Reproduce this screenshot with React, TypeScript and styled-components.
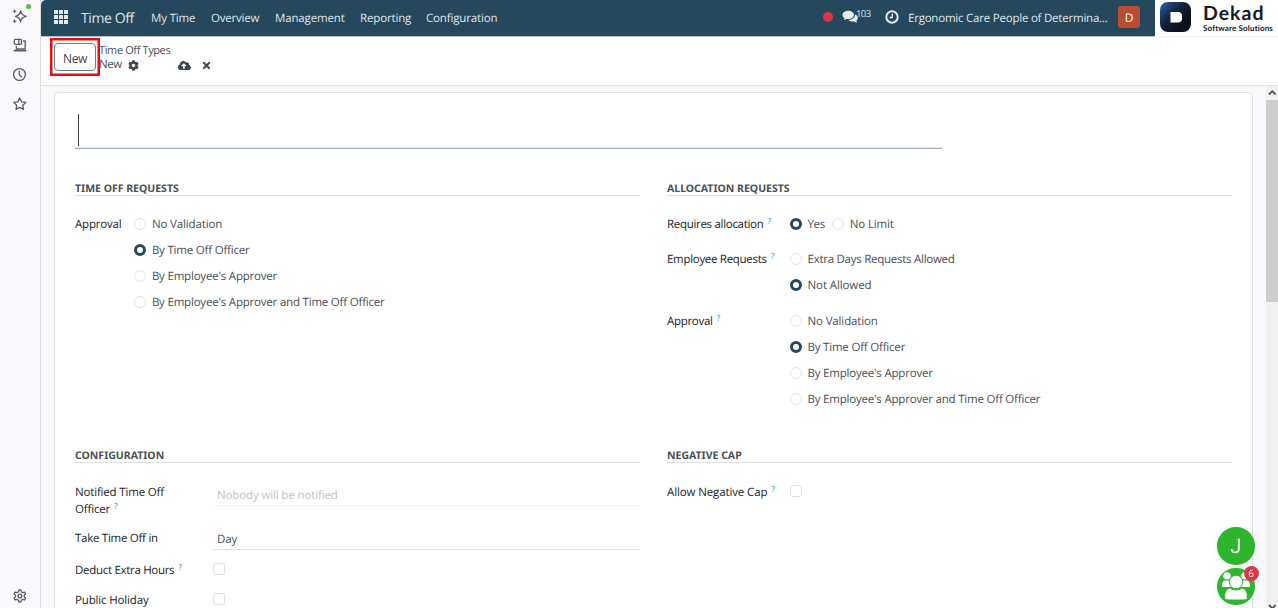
import React from 'react';
import styled, { createGlobalStyle, css } from 'styled-components';
import { FaCog, FaCloudUploadAlt, FaTimes } from 'react-icons/fa';

const GlobalStyle = createGlobalStyle`
  * { box-sizing: border-box; }
  body {
    margin: 0;
    overflow: hidden;
    font-family: "Open Sans", "Noto Sans", sans-serif;
    font-size: 11.5px;
    letter-spacing: -0.2px;
    color: #495057;
    text-rendering: geometricPrecision;
  }
`;

const Page = styled.div`
  display: grid;
  grid-template-columns: 41px 1fr;
  height: 608px;
  background: #f9f9fb;
`;

const SideBar = styled.aside`
  display: flex;
  flex-direction: column;
  align-items: center;
  gap: 13.3px;
  padding: 8px 1px 4px 0;
  border-right: 1px solid #dcdde1;
  color: #5b5b66;
  svg { display: block; }
`;

const SideIcon = styled.div<{ $bottom?: boolean }>`
  position: relative;
  width: 16px;
  height: 16px;
  margin-top: ${p => (p.$bottom ? 'auto' : '0')};
`;

const StatusDot = styled.i`
  position: absolute;
  top: -4px;
  left: 14px;
  width: 5px;
  height: 5px;
  border-radius: 50%;
  background: #4fbf40;
`;

const Main = styled.div`
  display: grid;
  grid-template-rows: 36px 50px 522px;
  min-width: 0;
  overflow: hidden;
  border-top-left-radius: 5px;
`;

const NavBar = styled.header`
  display: flex;
  background: #26485c;
  box-shadow: 0 1px 0 #b7c5cd;
  color: #dfe5e9;
  z-index: 1;
`;

const NavLeft = styled.nav`
  display: flex;
  align-items: center;
  padding-left: 13px;
  height: 36px;
`;

const AppsGrid = styled.div`
  display: grid;
  grid-template-columns: repeat(3, 4px);
  grid-auto-rows: 4px;
  gap: 1px;
  margin-right: 13px;
  margin-top: -3px;
  i { background: #e4e9ec; border-radius: 0.5px; }
`;

const AppName = styled.span`
  width: 70px;
  font-size: 14px;
  letter-spacing: -0.4px;
`;

const NavItem = styled.span<{ $w: number; $ls?: number }>`
  width: ${p => p.$w}px;
  white-space: nowrap;
  letter-spacing: ${p => p.$ls ?? -0.15}px;
`;

const NavRight = styled.div`
  display: flex;
  align-items: center;
  height: 34px;
  margin-left: auto;
`;

const RecordDot = styled.i`
  width: 10px;
  height: 10px;
  margin-right: 9px;
  border-radius: 50%;
  background: #dc3545;
`;

const Count = styled.span`
  width: 29px;
  margin: -8px 0 0 -2px;
  font-size: 9.5px;
  letter-spacing: -0.6px;
`;

const Company = styled.span`
  width: 210px;
  margin: 2px 0 0 9px;
  white-space: nowrap;
  letter-spacing: -0.22px;
`;

const Avatar = styled.div`
  display: flex;
  align-items: center;
  justify-content: center;
  width: 22px;
  height: 22px;
  margin-right: 15px;
  border-radius: 3px;
  background: #b84d31;
  color: #fff;
  font-size: 12px;
`;

const Brand = styled.div`
  display: flex;
  gap: 12px;
  width: 123px;
  height: 37px;
  padding: 2px 0 0 5px;
  background: #fff;
  border-bottom: 1px solid #f3f3f3;
  color: #17191c;
`;

const BrandMark = styled.svg`
  flex: none;
  display: block;
`;

const BrandName = styled.div`
  padding-top: 1px;
  font: 700 19.5px/22px Lato, sans-serif;
  letter-spacing: 1px;
`;

const BrandSub = styled.div`
  margin-top: -1px;
  font: 700 8px/9px Lato, sans-serif;
  letter-spacing: 0.15px;
  white-space: nowrap;
`;

const ControlBar = styled.div`
  display: flex;
  padding: 2px 0 0 9px;
  background: #fff;
  border-bottom: 1px solid #dee2e6;
`;

const Highlight = styled.div`
  width: 50px;
  height: 38px;
  padding: 3px 1px;
  border: 2px solid #e30f12;
  box-shadow: inset 0 0 0 0.5px #e30f12;
`;

const NewButton = styled.button`
  display: block;
  width: 42px;
  height: 28px;
  margin-left: 1px;
  padding: 2px 0 0;
  border: 1px solid #6a7f8c;
  border-radius: 4px;
  background: #fff;
  color: #3f474e;
  font: inherit;
  font-size: 12px;
  letter-spacing: -0.3px;
`;

const Crumbs = styled.div`
  margin-left: -1px;
  padding-top: 6px;
  line-height: 14px;
  font-size: 11px;
  letter-spacing: -0.38px;
  color: #495057;
`;

const CrumbRow = styled.div`
  display: flex;
  align-items: center;
  font-size: 11.5px;
  svg { display: block; color: #3f474e; }
  svg:nth-of-type(1) { margin-left: 6px; }
  svg:nth-of-type(2) { margin-left: 39px; }
  svg:nth-of-type(3) { margin-left: 10px; }
`;

const Scroller = styled.div`
  display: grid;
  grid-template-columns: 1fr 12px;
  grid-template-rows: 522px;
  overflow: hidden;
  background: #f8f9fa;
`;

const Sheet = styled.main`
  width: 1199px;
  height: 530px;
  margin: 6px 0 0 13px;
  padding: 17px 19px 0 20px;
  border: 1px solid #dee2e6;
  border-radius: 4px;
  background: #fff;
`;

const TitleField = styled.div`
  width: 867px;
  height: 39px;
  padding: 4px 3px 0;
  border-bottom: 1px solid #9fb0bb;
  box-shadow: inset 0 -1px 0 #e2e6e9;
`;

const Caret = styled.div`
  width: 1px;
  height: 32px;
  background: #3a4046;
`;

const Columns = styled.div`
  display: grid;
  grid-template-columns: 565px 565px;
  column-gap: 27px;
  margin-top: 32px;
`;

const Section = styled.section<{ $h?: number }>`
  height: ${p => p.$h ?? 160}px;
`;

const Heading = styled.h2`
  height: 15px;
  margin: 0 0 20px;
  border-bottom: 1px solid #dee2e6;
  font: 700 10.5px/16px "Noto Sans", sans-serif;
  letter-spacing: 0;
  color: #495057;
`;

const Field = styled.div<{ $label: number; $gap?: number; $top?: number }>`
  display: grid;
  grid-template-columns: ${p => p.$label}px 1fr;
  margin-bottom: ${p => p.$gap ?? 0}px;
  padding-top: ${p => p.$top ?? 0}px;
`;

const Label = styled.label<{ $ls?: number; $top?: number }>`
  padding-top: ${p => p.$top ?? 0}px;
  line-height: 17px;
  color: #212529;
  white-space: nowrap;
  letter-spacing: ${p => p.$ls ?? -0.3}px;
`;

const Help = styled.sup`
  margin-left: 4px;
  font-size: 8.5px;
  line-height: 0;
  vertical-align: 4px;
  color: #17a2b8;
`;

const Options = styled.div<{ $row?: boolean }>`
  display: flex;
  flex-direction: ${p => (p.$row ? 'row' : 'column')};
  gap: ${p => (p.$row ? '7.5px' : '9px')};
`;

const Option = styled.div<{ $ls?: number }>`
  display: flex;
  align-items: center;
  gap: 5.5px;
  height: 17px;
  white-space: nowrap;
  letter-spacing: ${p => p.$ls ?? -0.2}px;
`;

const Radio = styled.i<{ $on?: boolean }>`
  flex: none;
  width: 12px;
  height: 12px;
  margin-top: -1px;
  border: 1px solid #e2e5e8;
  border-radius: 50%;
  ${p => p.$on && css`border: 3.5px solid #26485c;`}
`;

const CheckBox = styled.i`
  display: block;
  width: 12px;
  height: 12px;
  margin: 1px 0 0 0.4px;
  border: 1px solid #dfe2e6;
  border-radius: 3px;
`;

const TextInput = styled.div<{ $empty?: boolean }>`
  height: 22px;
  padding-left: 4px;
  line-height: ${p => (p.$empty ? 23 : 24)}px;
  letter-spacing: -0.13px;
  border-bottom: 1px solid ${p => (p.$empty ? '#f3f4f5' : '#e3e5e8')};
  color: ${p => (p.$empty ? '#c0c4c9' : '#495057')};
`;

const ScrollBar = styled.div`
  display: flex;
  flex-direction: column;
  align-items: center;
  background: #f1f1f1;
  svg { flex: none; display: block; }
`;

const Thumb = styled.div`
  width: 12px;
  height: 202px;
  margin-bottom: auto;
  background: #cdcdcd;
`;

const ChatDock = styled.div`
  position: fixed;
  left: 1217px;
  top: 527px;
  display: flex;
  flex-direction: column;
  gap: 3px;
`;

const Bubble = styled.div`
  position: relative;
  display: flex;
  align-items: center;
  justify-content: center;
  width: 37.5px;
  height: 37.5px;
  border-radius: 50%;
  background: #2eb52e;
  color: #fff;
  font: 400 20px Roboto, sans-serif;
  box-shadow: 0 1px 6px rgba(0, 0, 0, 0.08);
  svg { flex: none; }
`;

const Badge = styled.span`
  position: absolute;
  top: -2px;
  right: -4px;
  width: 15px;
  height: 15px;
  border-radius: 50%;
  background: #dc3545;
  font: 400 10px/15px "Open Sans", sans-serif;
  text-align: center;
`;

const ApprovalOptions = () => (
  <Options>
    <Option $ls={-0.14}><Radio />No Validation</Option>
    <Option><Radio $on />By Time Off Officer</Option>
    <Option $ls={-0.2}><Radio />By Employee's Approver</Option>
    <Option><Radio />By Employee's Approver and Time Off Officer</Option>
  </Options>
);

const line = { fill: 'none', stroke: 'currentColor', strokeWidth: 1.3, strokeLinejoin: 'round' as const, strokeLinecap: 'round' as const };

export default function App() {
  return (
    <Page>
      <GlobalStyle />
      <SideBar>
        <SideIcon>
          <svg width="16" height="16" viewBox="0 0 16 16" {...line}>
            <path d="M8.700 2.800Q9.200 7.300 14.200 8.300 9.200 9.300 8.700 13.800 7.800 9.300 3.400 8.300 7.800 7.300 8.700 2.800Z" />
            <path d="M2.600 1.900v2.600M1.300 3.200h2.600M2.600 11.900v2.600M1.300 13.200h2.600" strokeWidth="1.100" />
          </svg>
          <StatusDot />
        </SideIcon>
        <SideIcon>
          <svg width="16" height="16" viewBox="0 0 16 16" {...line}>
            <rect x="2.300" y="2.300" width="7.200" height="5" rx="1" />
            <path d="M6.800 2.500v4.600M11.500 4h1.700v7.500M4.300 9.500v2M4.300 12h9" />
            <path d="M2.500 13.600h11.200" strokeWidth="1.800" />
          </svg>
        </SideIcon>
        <SideIcon>
          <svg width="16" height="16" viewBox="0 0 16 16" {...line}>
            <circle cx="7.500" cy="7.500" r="5.900" />
            <path d="M7.300 4.100v3.600l2.200 2.200" />
          </svg>
        </SideIcon>
        <SideIcon>
          <svg width="16" height="16" viewBox="0 0 16 16" {...line}>
            <path d="M7.700 2l1.900 3.800 4.200.6-3 2.900.7 4.100-3.800-2-3.700 2 .7-4.100-3-2.900 4.200-.6z" />
          </svg>
        </SideIcon>
        <SideIcon $bottom>
          <svg width="16" height="16" viewBox="0 0 16 16" {...line}>
            <path d="M6.900 2h1.900l.5 1.900 1.400.8 1.900-.6 1 1.800-1.400 1.400v1.500l1.400 1.400-1 1.800-1.900-.6-1.400.8-.5 1.900H6.900l-.5-1.900L5 11.400l-1.900.6-1-1.800 1.400-1.400V7.300L2.100 5.900l1-1.800 1.900.6 1.400-.8z" />
            <circle cx="7.850" cy="8.050" r="1.900" />
          </svg>
        </SideIcon>
      </SideBar>

      <Main>
        <NavBar>
          <NavLeft>
            <AppsGrid>{Array.from({ length: 9 }, (_, i) => <i key={i} />)}</AppsGrid>
            <AppName>Time Off</AppName>
            <NavItem $w={60}>My Time</NavItem>
            <NavItem $w={64} $ls={-0.22}>Overview</NavItem>
            <NavItem $w={85}>Management</NavItem>
            <NavItem $w={66}>Reporting</NavItem>
            <NavItem $w={72}>Configuration</NavItem>
          </NavLeft>
          <NavRight>
            <RecordDot />
            <svg width="16" height="14" viewBox="0 0 16 14" fill="#e4e9ec">
              <path d="M6.200.8C3 .8.5 2.600.5 5c0 1.300.8 2.500 2 3.200-.2.700-.6 1.200-1 1.600 1.200 0 2.300-.5 3-.9.500.1 1.100.2 1.700.2 3.200 0 5.700-1.800 5.700-4.100S9.400.8 6.200.8z" />
              <path d="M12.900 4.600c.2 3.200-2.800 5.400-6.400 5.500 1 1 2.500 1.500 4.100 1.500.6 0 1.100 0 1.600-.2.800.5 1.700 1 3 1-.5-.5-.8-1-1-1.600 1.100-.700 1.700-1.700 1.700-2.800 0-1.500-1.200-2.800-3-3.400z" />
            </svg>
            <Count>103</Count>
            <svg width="14" height="14" viewBox="0 0 14 14" fill="none" stroke="#e4e9ec" strokeWidth="2">
              <circle cx="7" cy="7" r="5.700" />
              <path d="M7.300 3.600v3.900H4.600" strokeWidth="1.300" />
            </svg>
            <Company>Ergonomic Care People of Determina...</Company>
            <Avatar>D</Avatar>
          </NavRight>
          <Brand>
            <BrandMark width="31" height="31" viewBox="0 0 31 31">
              <defs>
                <linearGradient id="mark" x1="0" y1="0" x2="0.75" y2="0.75">
                  <stop offset="0" stopColor="#2c62b0" />
                  <stop offset="0.55" stopColor="#12233f" />
                  <stop offset="1" stopColor="#0c1018" />
                </linearGradient>
              </defs>
              <rect width="31" height="30" rx="8" fill="url(#mark)" />
              <path d="M10.500 10h7.500a4 4 0 0 1 4 4v2.500a4 4 0 0 1-4 4h-7.500z" fill="#fff" />
            </BrandMark>
            <div>
              <BrandName>Dekad</BrandName>
              <BrandSub>Software Solutions</BrandSub>
            </div>
          </Brand>
        </NavBar>

        <ControlBar>
          <Highlight><NewButton>New</NewButton></Highlight>
          <Crumbs>
            <div>Time Off Types</div>
            <CrumbRow>
              New
              <FaCog size={11} />
              <FaCloudUploadAlt size={13} />
              <FaTimes size={11} />
            </CrumbRow>
          </Crumbs>
        </ControlBar>

        <Scroller>
          <Sheet>
            <TitleField><Caret /></TitleField>
            <Columns>
              <Section $h={267}>
                <Heading>TIME OFF REQUESTS</Heading>
                <Field $label={59.4}>
                  <Label $ls={-0.2}>Approval</Label>
                  <ApprovalOptions />
                </Field>
              </Section>
              <Section $h={267}>
                <Heading>ALLOCATION REQUESTS</Heading>
                <Field $label={123} $gap={18}>
                  <Label>Requires allocation<Help>?</Help></Label>
                  <Options $row>
                    <Option $ls={-0.35}><Radio $on />Yes</Option>
                    <Option $ls={-0.15}><Radio />No Limit</Option>
                  </Options>
                </Field>
                <Field $label={123} $gap={19}>
                  <Label>Employee Requests<Help>?</Help></Label>
                  <Options>
                    <Option $ls={-0.26}><Radio />Extra Days Requests Allowed</Option>
                    <Option $ls={-0.1}><Radio $on />Not Allowed</Option>
                  </Options>
                </Field>
                <Field $label={123}>
                  <Label>Approval<Help>?</Help></Label>
                  <ApprovalOptions />
                </Field>
              </Section>
              <Section>
                <Heading>CONFIGURATION</Heading>
                <Field $label={138} $gap={10} $top={1}>
                  <Label $ls={-0.17}>Notified Time Off<br />Officer<Help>?</Help></Label>
                  <TextInput $empty>Nobody will be notified</TextInput>
                </Field>
                <Field $label={138} $gap={12}>
                  <Label $ls={-0.27} $top={2}>Take Time Off in</Label>
                  <TextInput>Day</TextInput>
                </Field>
                <Field $label={138} $gap={13}>
                  <Label>Deduct Extra Hours<Help>?</Help></Label>
                  <CheckBox />
                </Field>
                <Field $label={138}>
                  <Label $ls={-0.15}>Public Holiday</Label>
                  <CheckBox />
                </Field>
              </Section>
              <Section>
                <Heading>NEGATIVE CAP</Heading>
                <Field $label={123} $top={1}>
                  <Label $ls={-0.12}>Allow Negative Cap<Help>?</Help></Label>
                  <CheckBox />
                </Field>
              </Section>
            </Columns>
          </Sheet>
          <ScrollBar>
            <svg width="12" height="14" viewBox="0 0 12 14" fill="none" stroke="#505050" strokeWidth="1.800"><path d="M3 8.500l3.300-3.300 3.300 3.300" /></svg>
            <Thumb />
            <svg width="12" height="4" viewBox="0 0 12 4" fill="none" stroke="#505050" strokeWidth="1.800"><path d="M3 1l3.300 3.300L9.600 1" /></svg>
          </ScrollBar>
        </Scroller>
      </Main>

      <ChatDock>
        <Bubble>J</Bubble>
        <Bubble>
          <svg width="38" height="38" viewBox="0 0 38 38" fill="#fff" stroke="#2eb52e" strokeWidth="1">
            <circle cx="10" cy="9" r="4.300" />
            <circle cx="28" cy="9" r="4.300" />
            <path d="M4.500 20.500c-.5-4 1-7 4-7.500h4c2 1 2.500 3 2.500 7.500z" />
            <path d="M33.500 20.500c.5-4-1-7-4-7.500h-4c-2 1-2.500 3-2.500 7.500z" />
            <circle cx="19" cy="15" r="6.800" />
            <path d="M8 32.500c-1-6 .5-10.500 5-11.500 3.500 2.500 8.500 2.500 12 0 4.500 1 6 5.500 5 11.500-1 .8-21 .8-22 0z" />
          </svg>
          <Badge>6</Badge>
        </Bubble>
      </ChatDock>
    </Page>
  );
}
